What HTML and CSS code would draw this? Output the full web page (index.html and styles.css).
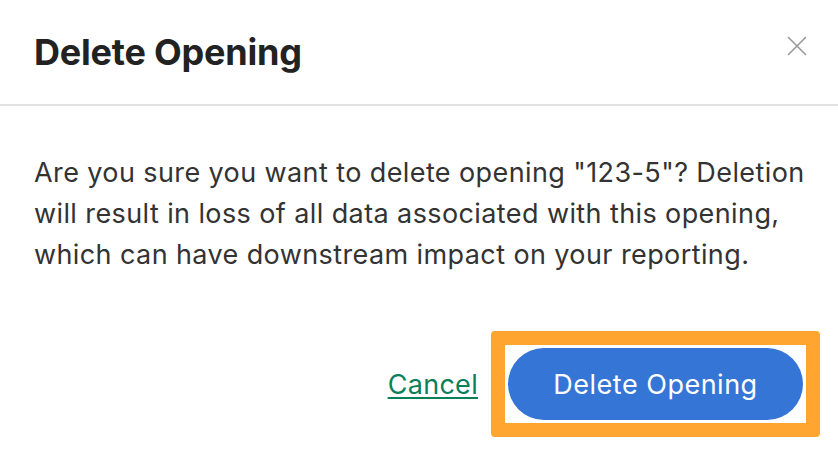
FILE: index.html
```html
<!DOCTYPE html>
<html>
<head>
<meta charset="utf-8">
<link rel="stylesheet" href="styles.css">
</head>
<body>
<div class="dialog">
  <div class="header">
    <h1 class="title">Delete Opening</h1>
    <button class="close" aria-label="Close">
      <svg width="20" height="20" viewBox="0 0 20 20"><path d="M1 1 L19 19 M19 1 L1 19" stroke="#999" stroke-width="1.6" fill="none"/></svg>
    </button>
  </div>
  <div class="body">
    <p class="message">Are you sure you want to delete opening "123-5"? Deletion will result in loss of all data associated with this opening, which can have downstream impact on your reporting.</p>
  </div>
  <div class="footer">
    <a class="cancel" href="#">Cancel</a>
    <span class="highlight"><button class="primary">Delete Opening</button></span>
  </div>
</div>
</body>
</html>
```
FILE: styles.css
```css
html, body {
  margin: 0;
  padding: 0;
  background: #fff;
}
body {
  font-family: Inter, "Noto Sans", sans-serif;
  color: #333;
}
.dialog {
  width: 838px;
  height: 454px;
  display: flex;
  flex-direction: column;
}
.header {
  flex-shrink: 0;
  height: 106px;
  box-sizing: border-box;
  border-bottom: 2px solid #e2e2e2;
  display: flex;
  align-items: center;
  justify-content: space-between;
  padding: 0 30px 0 34px;
}
.title {
  margin: 0;
  font-size: 36px;
  font-weight: 700;
  color: #222;
  letter-spacing: -0.2px;
}
.close {
  border: 0;
  background: none;
  padding: 0;
  width: 22px;
  height: 22px;
  display: flex;
  align-items: center;
  justify-content: center;
  position: relative;
  top: -6px;
}
.body {
  flex-shrink: 0;
  padding: 46px 14px 0 34px;
}
.message {
  margin: 0;
  font-size: 27px;
  letter-spacing: 0.4px;
  line-height: 41px;
  color: #333;
}
.footer {
  flex-shrink: 0;
  display: flex;
  justify-content: flex-end;
  align-items: center;
  gap: 30px;
  padding: 0 35px;
  margin-top: 73px;
}
.cancel {
  color: #0a7f5a;
  font-size: 27px;
  letter-spacing: 0.3px;
  text-decoration: underline;
  text-underline-offset: 3px;
}
.highlight {
  display: inline-flex;
  border: 14px solid #ffa530;
  border-radius: 4px;
  padding: 3px;
  margin: -17px;
  background: #fff;
}
.primary {
  width: 295px;
  height: 72px;
  border: 0;
  border-radius: 36px;
  background: #3575d6;
  color: #fff;
  font-family: Inter, "Noto Sans", sans-serif;
  font-size: 27px;
  letter-spacing: 0.5px;
}
```
